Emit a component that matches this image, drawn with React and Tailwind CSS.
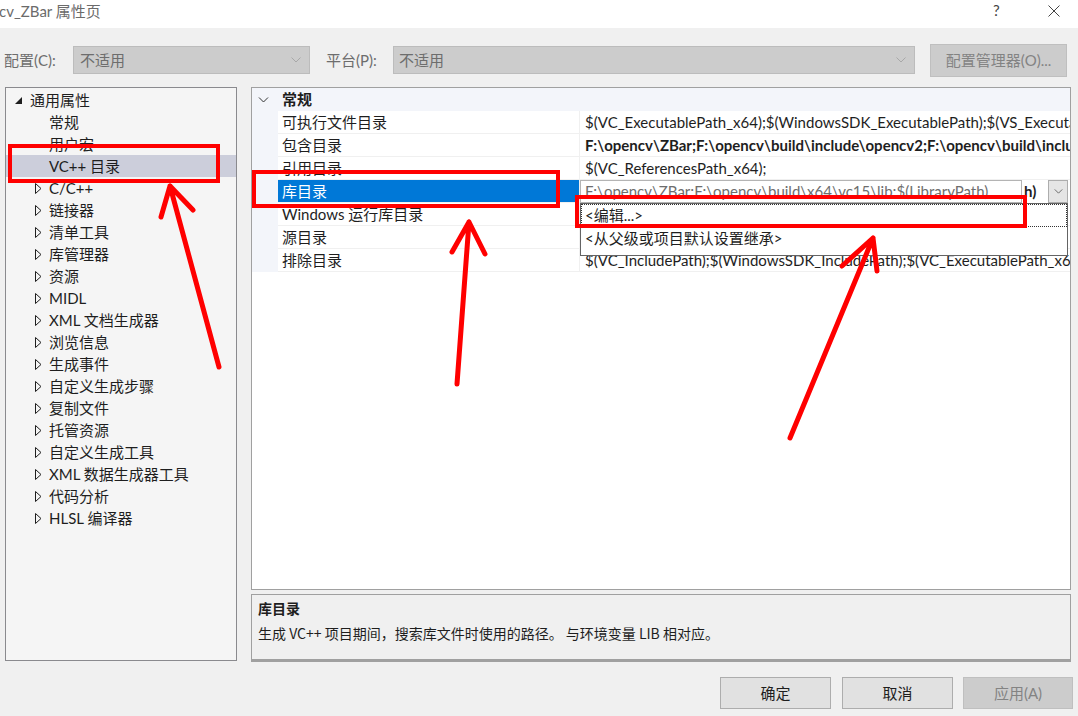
import React from 'react';

const treeItems = [
  { label: '常规' },
  { label: '用户宏' },
  { label: 'VC++ 目录', selected: true },
  { label: 'C/C++', more: true },
  { label: '链接器', more: true },
  { label: '清单工具', more: true },
  { label: '库管理器', more: true },
  { label: '资源', more: true },
  { label: 'MIDL', more: true },
  { label: 'XML 文档生成器', more: true },
  { label: '浏览信息', more: true },
  { label: '生成事件', more: true },
  { label: '自定义生成步骤', more: true },
  { label: '复制文件', more: true },
  { label: '托管资源', more: true },
  { label: '自定义生成工具', more: true },
  { label: 'XML 数据生成器工具', more: true },
  { label: '代码分析', more: true },
  { label: 'HLSL 编译器', more: true },
];

const rows = [
  { name: '可执行文件目录', value: '$(VC_ExecutablePath_x64);$(WindowsSDK_ExecutablePath);$(VS_ExecutablePath);$(MSBuild_ExecutablePath);$(FxCopDir);$(PATH);' },
  { name: '包含目录', value: 'F:\\opencv\\ZBar;F:\\opencv\\build\\include\\opencv2;F:\\opencv\\build\\include;$(IncludePath)', bold: true },
  { name: '引用目录', value: '$(VC_ReferencesPath_x64);' },
  { name: '库目录', selected: true },
  { name: 'Windows 运行库目录', value: '$(WindowsSDK_MetadataPath);' },
  { name: '源目录', value: '$(VC_SourcePath);' },
  { name: '排除目录', value: '$(VC_IncludePath);$(WindowsSDK_IncludePath);$(VC_ExecutablePath_x64);$(VC_LibraryPath_x64)' },
];

// 收起状态的空心三角
const Collapsed = () => (
  <svg width="7" height="11" viewBox="0 0 7 11" className="shrink-0">
    <polygon points="0.5,0.5 6,5.5 0.5,10.5" fill="none" stroke="#1e1e1e" strokeWidth="1" />
  </svg>
);

const Chevron = ({ color = '#a0a0a0', w = 10, h = 6 }) => (
  <svg width={w} height={h} viewBox="0 0 10 6">
    <polyline points="0.5,0.5 5,5 9.5,0.5" fill="none" stroke={color} strokeWidth="1" />
  </svg>
);

const App = () => {
  return (
    <div className="relative w-[1078px] h-[716px] overflow-hidden bg-[#f0f0f0] text-[#1e1e1e] font-['Lato','Noto_Sans_CJK_SC',sans-serif]">
      {/* 标题栏 */}
      <div className="h-[28px] bg-white flex items-start">
        <div className="flex-1 text-[15px] leading-[22px] text-[#6b6b6b] -ml-[1px]">cv_ZBar 属性页</div>
        <div className="w-[14px] text-[15px] leading-[20px] text-[#444] mr-[41px]">?</div>
        <svg width="12" height="12" viewBox="0 0 12 12" className="mt-[5px] mr-[18px]">
          <path d="M0.5 0.5 L11.5 11.5 M11.5 0.5 L0.5 11.5" stroke="#444" strokeWidth="1" />
        </svg>
      </div>

      {/* 配置行 */}
      <div className="h-[59px] flex items-start pt-[16px] text-[15px] text-[#6d6d6d]">
        <div className="w-[73px] shrink-0 pl-[4px] mt-[2px] leading-[28px]">配置(C):</div>
        <div className="w-[237px] shrink-0 h-[28px] mt-[2px] bg-[#cccccc] border border-[#bcbcbc] flex items-center pl-[6px] pr-[8px]">
          <span className="flex-1 leading-[26px]">不适用</span>
          <Chevron color="#a8a8a8" />
        </div>
        <div className="w-[83px] shrink-0 pl-[16px] mt-[2px] leading-[28px]">平台(P):</div>
        <div className="w-[522px] shrink-0 h-[28px] mt-[2px] bg-[#cccccc] border border-[#bcbcbc] flex items-center pl-[5px] pr-[8px]">
          <span className="flex-1 leading-[26px]">不适用</span>
          <Chevron color="#a8a8a8" />
        </div>
        <div className="w-[15px] shrink-0" />
        <div className="w-[137px] shrink-0 h-[33px] bg-[#cccccc] border border-[#bfbfbf] flex items-center justify-center text-[#838383] leading-[31px] whitespace-nowrap">
          配置管理器(O)...
        </div>
      </div>

      {/* 主区域 */}
      <div className="flex pl-[5px] gap-[14px]">
        {/* 左侧树 */}
        <div className="w-[232px] shrink-0 h-[574px] border border-[#8a8a8e] bg-[#f5f5f5] pt-[1px] text-[15px]">
          <div className="h-[22px] flex items-center">
            <svg width="7" height="7" viewBox="0 0 7 7" className="ml-[9px] mr-[8px] mt-[1px]">
              <polygon points="7,0 7,7 0,7" fill="#1e1e1e" />
            </svg>
            <span className="leading-[22px]">通用属性</span>
          </div>
          {treeItems.map((item) => (
            <div
              key={item.label}
              className={`h-[22px] flex items-center ${item.selected ? 'bg-[#cccedb]' : ''}`}
            >
              <div className="w-[43px] shrink-0 pl-[29px] flex items-center">{item.more && <Collapsed />}</div>
              <span className="leading-[22px] whitespace-nowrap">{item.label}</span>
            </div>
          ))}
        </div>

        {/* 右侧 */}
        <div className="w-[820px] shrink-0 min-w-0 flex flex-col gap-[4px]">
          <div className="h-[503px] border border-[#a0a0a0] bg-white text-[15px] overflow-hidden">
            <div className="h-[23px] bg-[#f3f5fa] flex items-center">
              <div className="w-[26px] shrink-0 pl-[6px] flex items-center">
                <Chevron color="#333" w={11} h={6} />
              </div>
              <span className="font-bold leading-[23px] pl-[4px]">常规</span>
            </div>
            {rows.map((row) => (
              <div key={row.name} className="h-[23px] flex">
                <div className="w-[26px] shrink-0 bg-[#f3f5fa]" />
                <div
                  className={`w-[302px] shrink-0 pl-[4px] leading-[22px] whitespace-nowrap border-b border-r border-[#f0f0f0] ${row.selected ? 'bg-[#0078d7] text-white' : ''}`}
                >
                  {row.name}
                </div>
                {row.selected ? (
                  <div className="relative flex-1 min-w-0 flex items-stretch">
                    <div className="w-[442px] shrink-0 border border-[#b4b4b4] pl-[4px] text-[#6d6d6d] leading-[21px] whitespace-nowrap overflow-hidden">
                      F:\opencv\ZBar;F:\opencv\build\x64\vc15\lib;$(LibraryPath)
                    </div>
                    <span className="font-bold leading-[22px] pl-[2px]">h)</span>
                    <div className="ml-auto mr-[2px] w-[20px] shrink-0 bg-[#e5e5e5] border border-[#adadad] flex items-center justify-center">
                      <Chevron color="#555" w={9} h={5} />
                    </div>
                    {/* 下拉列表 */}
                    <div className="absolute left-0 top-[23px] w-[488px] h-[53px] bg-white border border-[#646464] z-10">
                      <div className="h-[23px] border border-dotted border-[#333] pl-[3px] leading-[21px]">&lt;编辑...&gt;</div>
                      <div className="h-[23px] pl-[4px] leading-[23px]">&lt;从父级或项目默认设置继承&gt;</div>
                    </div>
                  </div>
                ) : (
                  <div
                    className={`flex-1 min-w-0 pl-[5px] leading-[22px] whitespace-nowrap overflow-hidden border-b border-[#f0f0f0] ${row.bold ? 'font-bold' : ''}`}
                  >
                    {row.value}
                  </div>
                )}
              </div>
            ))}
          </div>

          {/* 描述 */}
          <div className="h-[68px] border border-[#a0a0a0] border-b-[3px] bg-[#f0f0f0] px-[6px] pt-[2px] font-['Noto_Sans_CJK_SC',sans-serif] text-[14px]">
            <div className="font-bold leading-[22px]">库目录</div>
            <div className="leading-[24px] mt-[2px]">生成 VC++ 项目期间，搜索库文件时使用的路径。 与环境变量 LIB 相对应。</div>
          </div>
        </div>
      </div>

      {/* 按钮 */}
      <div className="flex justify-end pr-[5px] mt-[15px] text-[15px]">
        <div className="w-[111px] h-[32px] bg-[#e1e1e1] border border-[#adadad] flex items-center justify-center">确定</div>
        <div className="w-[111px] h-[32px] ml-[11px] bg-[#e1e1e1] border border-[#adadad] flex items-center justify-center">取消</div>
        <div className="w-[110px] h-[32px] ml-[10px] bg-[#cccccc] border border-[#bfbfbf] text-[#838383] flex items-center justify-center">应用(A)</div>
      </div>

      {/* 红色标注 */}
      <svg className="absolute inset-0 pointer-events-none z-20" width="1078" height="716" viewBox="0 0 1078 716">
        <g fill="none" stroke="#ff0000" strokeWidth="4">
          <rect x="10" y="146" width="208" height="35" />
          <rect x="254" y="172" width="304" height="34" />
          <rect x="577" y="197" width="448" height="29" />
        </g>
        <g fill="none" stroke="#ff0000" strokeWidth="5" strokeLinecap="round" strokeLinejoin="round">
          <path d="M219 367 L170 186 M170 186 L161 217 M170 186 L193 210" />
          <path d="M457 384 L469 222 M469 222 L452 252 M469 222 L485 254" />
          <path d="M790 438 L873 238 M873 238 L842 266 M873 238 L877 271" />
        </g>
      </svg>
    </div>
  );
};

export default App;
